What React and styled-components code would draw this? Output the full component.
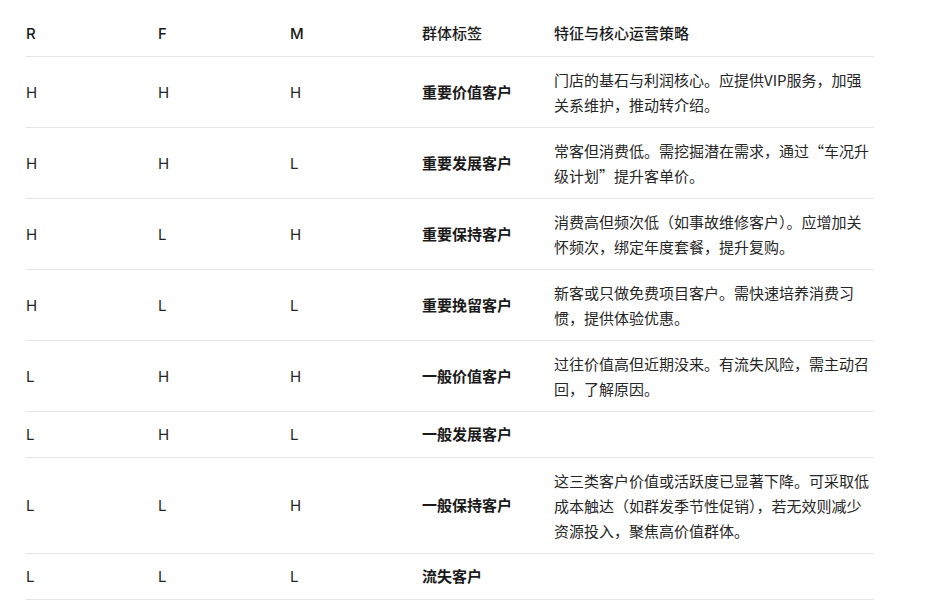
import styled, { createGlobalStyle } from "styled-components"

const GlobalStyle = createGlobalStyle`
  body {
    margin: 0;
    background: #fff;
    font-family: Inter, "Noto Sans CJK SC", sans-serif;
    color: #1f1f1f;
  }
`

const Page = styled.div`
  padding: 11px 0 0 26px;
`

const Table = styled.div`
  width: 848px;
  display: grid;
  grid-template-columns: 132px 132px 132px 132px 320px;
`

const Cell = styled.div`
  display: flex;
  align-items: center;
  padding: 10px 0;
  font-size: 15px;
  line-height: 25px;
  border-bottom: 1px solid #e5e5e5;
  font-weight: ${(p) => (p.$head ? 500 : p.$bold ? 600 : 400)};
  color: ${(p) => (p.$head || p.$bold ? "#1a1a1a" : "#262626")};
`

const DescCell = styled(Cell)`
  font-family: "Noto Sans CJK SC", Inter, sans-serif;
`

const rows = [
  ["H", "H", "H", "重要价值客户", "门店的基石与利润核心。应提供VIP服务，加强关系维护，推动转介绍。"],
  ["H", "H", "L", "重要发展客户", "常客但消费低。需挖掘潜在需求，通过“车况升级计划”提升客单价。"],
  ["H", "L", "H", "重要保持客户", "消费高但频次低（如事故维修客户）。应增加关怀频次，绑定年度套餐，提升复购。"],
  ["H", "L", "L", "重要挽留客户", "新客或只做免费项目客户。需快速培养消费习惯，提供体验优惠。"],
  ["L", "H", "H", "一般价值客户", "过往价值高但近期没来。有流失风险，需主动召回，了解原因。"],
  ["L", "H", "L", "一般发展客户", ""],
  ["L", "L", "H", "一般保持客户", "这三类客户价值或活跃度已显著下降。可采取低成本触达（如群发季节性促销），若无效则减少资源投入，聚焦高价值群体。"],
  ["L", "L", "L", "流失客户", ""],
]

const head = ["R", "F", "M", "群体标签", "特征与核心运营策略"]

export default function App() {
  return (
    <Page>
      <GlobalStyle />
      <Table>
        {head.map((h) => (
          <Cell key={h} $head>{h}</Cell>
        ))}
        {rows.map((r, i) =>
          r.map((c, j) =>
            j === 4 ? (
              <DescCell key={`${i}-${j}`}>{c}</DescCell>
            ) : (
              <Cell key={`${i}-${j}`} $bold={j === 3}>{c}</Cell>
            )
          )
        )}
      </Table>
    </Page>
  )
}
